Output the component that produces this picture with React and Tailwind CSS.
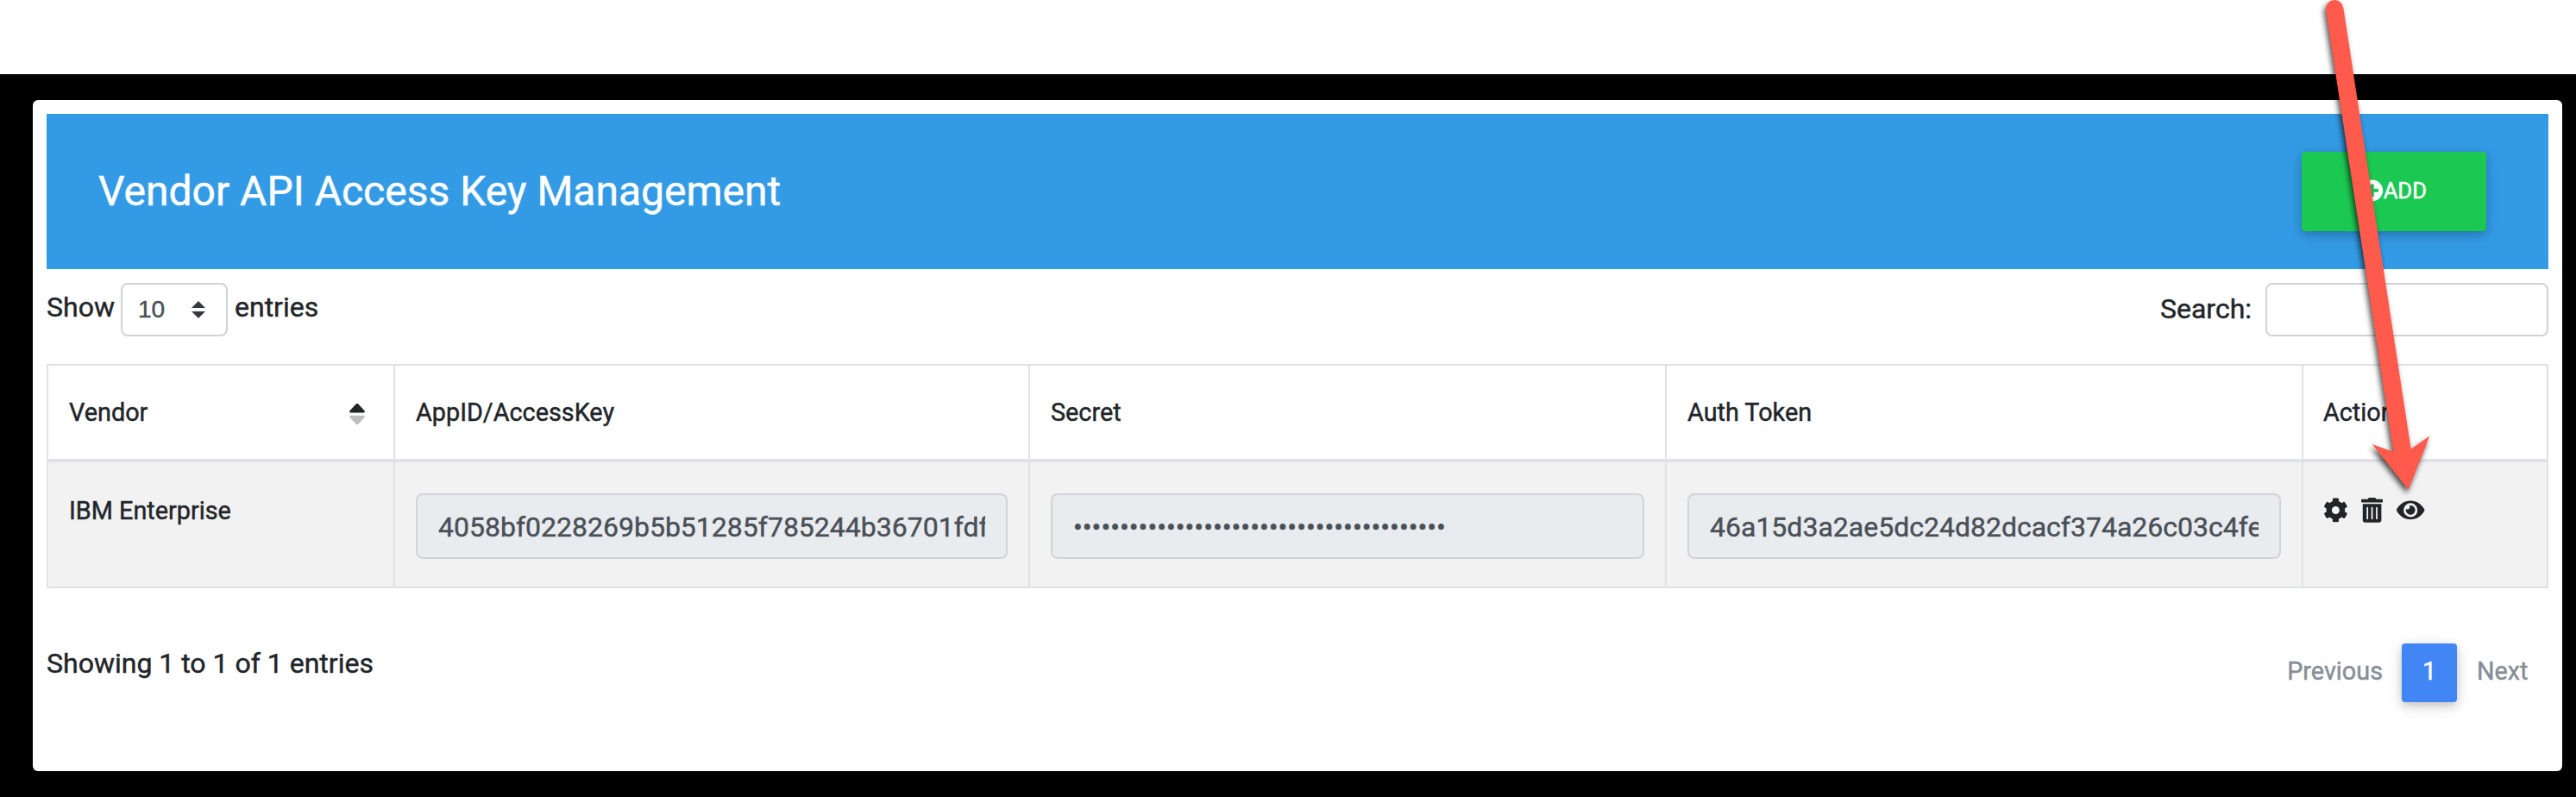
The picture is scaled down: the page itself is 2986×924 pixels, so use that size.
import { FaCog, FaEye, FaPlusCircle, FaTrashAlt } from "react-icons/fa";

const COLS = "grid grid-cols-[402px_736px_738px_738px_286px]";
const CELL = "border-l-2 border-[#dee2e6] px-6 last:border-r-2 last:pl-[23px]";

function SortIcon() {
  return (
    <svg className="mt-[3px] h-[26px] w-[18px]" viewBox="0 0 18 26" fill="#212529">
      <path d="M1.6 11.4h14.8c1.3 0 1.9-1.4 1-2.3L10.2 1.3c-.7-.7-1.7-.7-2.4 0L.6 9.1c-.9.9-.3 2.3 1 2.3z" />
      <path
        opacity="0.3"
        d="M1.6 14.8h14.8c1.3 0 1.9 1.4 1 2.3l-7.2 7.6c-.7.7-1.7.7-2.4 0L.6 17.1c-.9-.9-.3-2.3 1-2.3z"
      />
    </svg>
  );
}

function Field({ children }) {
  return (
    <div className="flex h-[76px] items-center rounded-lg border-2 border-[#ced4da] bg-[#e9ecef] px-6 text-[32px] text-[#495057]">
      <div className="mt-px w-full overflow-hidden whitespace-nowrap leading-[48px]">{children}</div>
    </div>
  );
}

function Header() {
  return (
    <div className="flex h-[180px] items-center justify-between bg-[#339be5] pr-[72px] pl-[60px] text-white">
      <h4 className="text-[48px] leading-[58px]">Vendor API Access Key Management</h4>
      <button className="flex h-[92px] w-[214px] items-center justify-center rounded bg-[#1bc952] pb-[2px] text-[25.6px] shadow-[0_4px_10px_rgba(0,0,0,0.16),0_4px_20px_rgba(0,0,0,0.12)]">
        <FaPlusCircle className="size-[25.6px]" />
        ADD
      </button>
    </div>
  );
}

function Controls() {
  return (
    <div className="mt-4 flex h-[62px] items-center justify-between text-[32px] leading-[48px]">
      <div className="flex items-center">
        <span className="mb-[6px] w-[78px]">Show</span>
        <div className="ml-2 flex h-[62px] w-[124px] items-center justify-between rounded-lg border-2 border-[#ced4da] pr-6 pl-[18px] font-['Liberation_Sans',sans-serif] text-[28px] text-[#495057]">
          <span className="leading-[42px]">10</span>
          <svg className="h-5 w-4" viewBox="0 0 4 5" fill="#343a40">
            <path d="M2 0L0 2h4zm0 5L0 3h4z" />
          </svg>
        </div>
        <span className="mb-[6px] ml-2">entries</span>
      </div>
      <div className="flex items-center">
        <span className="mb-[2px]">Search:</span>
        <div className="ml-4 h-[62px] w-[328px] rounded-lg border-2 border-[#ced4da]" />
      </div>
    </div>
  );
}

function KeyTable() {
  return (
    <div className="mt-8 border-y-2 border-[#dee2e6] text-[28.8px] leading-[43px]">
      <div className={`${COLS} h-[112px] border-b-4 border-[#dee2e6]`}>
        <div className={`${CELL} flex items-center justify-between`}>
          <span>Vendor</span>
          <span className="mr-[9px]">
            <SortIcon />
          </span>
        </div>
        <div className={`${CELL} flex items-center`}>AppID/AccessKey</div>
        <div className={`${CELL} flex items-center`}>Secret</div>
        <div className={`${CELL} flex items-center`}>Auth Token</div>
        <div className={`${CELL} flex items-center`}>Action</div>
      </div>
      <div className={`${COLS} h-[144px] bg-[#f2f2f2]`}>
        <div className={`${CELL} pt-[35px]`}>IBM Enterprise</div>
        <div className={`${CELL} pt-9`}>
          <Field>4058bf0228269b5b51285f785244b36701fdf</Field>
        </div>
        <div className={`${CELL} pt-9`}>
          <Field>{"•".repeat(40)}</Field>
        </div>
        <div className={`${CELL} pt-9`}>
          <Field>46a15d3a2ae5dc24d82dcacf374a26c03c4fe</Field>
        </div>
        <div className={`${CELL} flex items-start pt-[41px]`}>
          <FaCog className="size-[28.8px]" />
          <FaTrashAlt className="ml-[15.5px] h-[28.8px] w-[25.2px]" />
          <FaEye className="ml-4 h-[28.8px] w-[32.4px]" />
        </div>
      </div>
    </div>
  );
}

function Footer() {
  return (
    <div className="mt-16 flex items-start justify-between">
      <div className="text-[32px] leading-[46px]">Showing 1 to 1 of 1 entries</div>
      <div className="flex h-[68px] items-center text-[28.8px] leading-9 text-[#868e96]">
        <span className="pr-[22px] pb-1">Previous</span>
        <span className="flex h-[68px] w-16 items-center justify-center rounded bg-[#4285f4] pb-1 text-white shadow-[0_4px_10px_rgba(0,0,0,0.16),0_4px_20px_rgba(0,0,0,0.12)]">
          1
        </span>
        <span className="w-[106px] pb-1 pl-[23px]">Next</span>
      </div>
    </div>
  );
}

function PointerArrow() {
  return (
    <svg
      className="pointer-events-none absolute top-0 left-[2660px] h-[600px] w-[200px]"
      viewBox="2660 0 200 600"
    >
      <path
        className="drop-shadow-[-2px_4px_3px_rgba(0,0,0,0.7)]"
        fill="#ff5a4b"
        d="M2696 11.2A10.2 10.2 0 0 1 2716.3 9L2794.7 520.7L2816.5 505.3L2791.7 567.8L2749.7 515L2774.3 523.8Z"
      />
    </svg>
  );
}

export default function App() {
  return (
    <div className="relative h-[924px] w-[2986px] overflow-hidden bg-white pt-[86px] font-[Roboto,sans-serif] text-[#212529] [-webkit-text-stroke:0.45px]">
      <div className="h-[838px] bg-black pt-[30px] pr-4 pl-[38px]">
        <div className="h-[778px] rounded-md bg-white p-4">
          <Header />
          <Controls />
          <KeyTable />
          <Footer />
        </div>
      </div>
      <PointerArrow />
    </div>
  );
}
